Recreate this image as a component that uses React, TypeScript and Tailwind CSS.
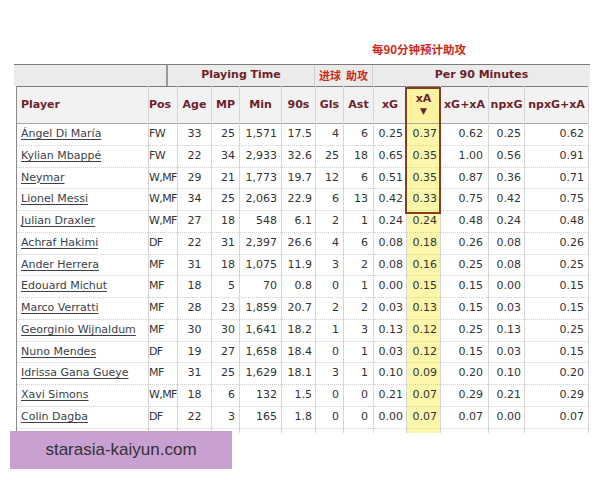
const rows: (string | number)[][] = [
  ["Ángel Di María", "FW", 33, 25, "1,571", "17.5", 4, 6, "0.25", "0.37", "0.62", "0.25", "0.62"],
  ["Kylian Mbappé", "FW", 22, 34, "2,933", "32.6", 25, 18, "0.65", "0.35", "1.00", "0.56", "0.91"],
  ["Neymar", "W,MF", 29, 21, "1,773", "19.7", 12, 6, "0.51", "0.35", "0.87", "0.36", "0.71"],
  ["Lionel Messi", "W,MF", 34, 25, "2,063", "22.9", 6, 13, "0.42", "0.33", "0.75", "0.42", "0.75"],
  ["Julian Draxler", "W,MF", 27, 18, "548", "6.1", 2, 1, "0.24", "0.24", "0.48", "0.24", "0.48"],
  ["Achraf Hakimi", "DF", 22, 31, "2,397", "26.6", 4, 6, "0.08", "0.18", "0.26", "0.08", "0.26"],
  ["Ander Herrera", "MF", 31, 18, "1,075", "11.9", 3, 2, "0.08", "0.16", "0.25", "0.08", "0.25"],
  ["Edouard Michut", "MF", 18, 5, "70", "0.8", 0, 1, "0.00", "0.15", "0.15", "0.00", "0.15"],
  ["Marco Verratti", "MF", 28, 23, "1,859", "20.7", 2, 2, "0.03", "0.13", "0.15", "0.03", "0.15"],
  ["Georginio Wijnaldum", "MF", 30, 30, "1,641", "18.2", 1, 3, "0.13", "0.12", "0.25", "0.13", "0.25"],
  ["Nuno Mendes", "DF", 19, 27, "1,658", "18.4", 0, 1, "0.03", "0.12", "0.15", "0.03", "0.15"],
  ["Idrissa Gana Gueye", "MF", 31, 25, "1,629", "18.1", 3, 1, "0.10", "0.09", "0.20", "0.10", "0.20"],
  ["Xavi Simons", "W,MF", 18, 6, "132", "1.5", 0, 0, "0.21", "0.07", "0.29", "0.21", "0.29"],
  ["Colin Dagba", "DF", 22, 3, "165", "1.8", 0, 0, "0.00", "0.07", "0.07", "0.00", "0.07"],
];

const widths = [
  "w-[132px]", "w-[29px]", "w-[34px]", "w-[28px]", "w-[42px]", "w-[34px]", "w-[28px]",
  "w-[30px]", "w-[33px]", "w-[34px]", "w-[48px]", "w-[36px]", "w-[64px]",
];

// body cell alignment per column
const cellCls = [
  "text-left pl-[4px] border-r border-r-[#8a8a8a]",
  "text-left pl-0 whitespace-nowrap tracking-[-0.6px]",
  "text-center",
  "text-right pr-[4px]",
  "text-right pr-[4px]",
  "text-right pr-[3px]",
  "text-right pr-[4px]",
  "text-right pr-[5px]",
  "text-right pr-[3px]",
  "text-right pr-[3px] bg-[#fbf7aa]",
  "text-right pr-[5px]",
  "text-right pr-[3px]",
  "text-right pr-[4px]",
];

const heads = ["Player", "Pos", "Age", "MP", "Min", "90s", "Gls", "Ast", "xG", "xA", "xG+xA", "npxG", "npxG+xA"];

const headCls = [
  "text-left pl-[4px] border-l border-l-[#8a8a8a] border-r border-r-[#8a8a8a]",
  "text-left pl-0",
  "text-center",
  "text-center",
  "text-center",
  "text-center",
  "text-center",
  "text-center",
  "text-center",
  "text-center bg-[#fbf3a0]",
  "text-center",
  "text-center",
  "text-center",
];

export default function App() {
  return (
    <div className="relative w-[600px] h-[480px] bg-white font-['DejaVu_Sans',sans-serif] text-[11px] text-[#333]">
      <div className="h-[64px] flex items-end pl-[372px] pb-[6px]">
        <span className="text-[11.5px] font-bold text-[#cc2a22] font-['Noto_Sans_CJK_SC','DejaVu_Sans',sans-serif]">
          每90分钟预计助攻
        </span>
      </div>

      <div className="ml-[14px] w-[576px] h-[22px] flex bg-[#ebebeb] border-t border-t-[#7c7c7c] font-bold text-[#6e1f2c]">
        <div className="w-[154px] border-r-2 border-r-[#999]" />
        <div className="w-[147px] flex items-center justify-center border-r border-r-[#cfcfcf]">Playing Time</div>
        <div className="w-[58px] flex items-center justify-center gap-[5px] border-r border-r-[#cfcfcf] text-[#cc2a22] font-['Noto_Sans_CJK_SC',sans-serif] text-[11px]">
          <span>进球</span>
          <span>助攻</span>
        </div>
        <div className="flex-1 flex items-center justify-center">Per 90 Minutes</div>
      </div>

      <table className="ml-[16px] w-[572px] table-fixed border-collapse">
        <colgroup>
          {widths.map((w, i) => (
            <col key={i} className={w} />
          ))}
        </colgroup>
        <thead>
          <tr className="h-[37px] bg-[#f2f2f2] border-t border-t-[#7c7c7c] border-b border-b-[#a8a8a8]">
            {heads.map((h, i) => (
              <th key={h} className={`font-bold text-[#6e1f2c] align-middle border-r border-r-[#d6d6d6] ${headCls[i]}`}>
                {h === "xA" ? (
                  <div className="flex flex-col items-center leading-[13px]">
                    <span>xA</span>
                    <span className="text-[9px]">▼</span>
                  </div>
                ) : (
                  h
                )}
              </th>
            ))}
          </tr>
        </thead>
        <tbody>
          {rows.map((r) => (
            <tr key={r[0] as string} className="h-[21.75px] border-b border-dotted border-b-[#cfcfcf]">
              {r.map((v, i) => (
                <td
                  key={i}
                  className={`p-0 align-middle border-r border-r-[#d6d6d6] ${i === 0 ? "border-l border-l-[#8a8a8a]" : ""} ${cellCls[i]}`}
                >
                  {i === 0 ? <span className="underline underline-offset-2 text-[#3a3f4a]">{v}</span> : v}
                </td>
              ))}
            </tr>
          ))}
          <tr className="h-[5px]">
            {heads.map((h, i) => (
              <td key={h} className={`p-0 border-r border-r-[#d6d6d6] ${i === 0 ? "border-l border-l-[#8a8a8a]" : ""} ${cellCls[i]}`} />
            ))}
          </tr>
        </tbody>
      </table>

      {/* highlight box around xA header + top four */}
      <div className="absolute left-[405px] top-[87px] w-[36px] h-[127px] border-2 border-[#8b3a1e]" />

      {/* watermark */}
      <div className="absolute left-[10px] top-[431px] w-[222px] h-[38px] bg-[#c9a0d2] flex items-center justify-center">
        <span className="font-['Liberation_Sans',sans-serif] text-[17px] text-[#333]">starasia-kaiyun.com</span>
      </div>
    </div>
  );
}
